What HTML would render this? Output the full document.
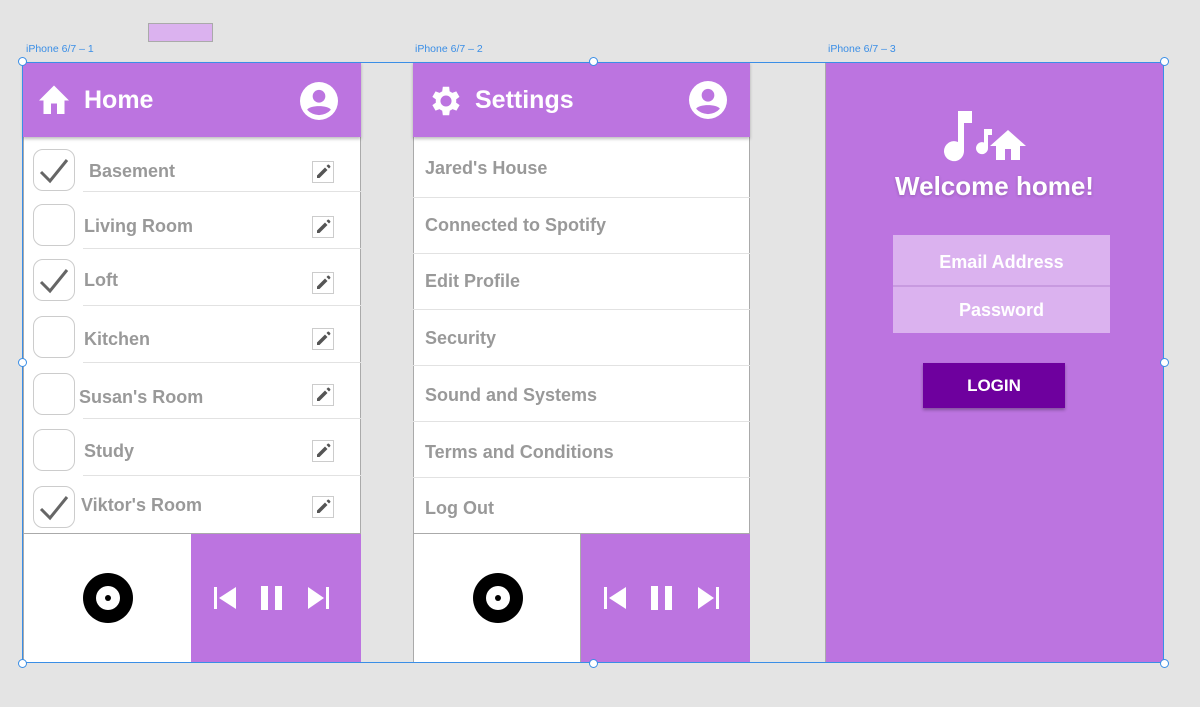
<!DOCTYPE html>
<html><head><style>
*{margin:0;padding:0;box-sizing:border-box}
body{width:1200px;height:707px;background:#e4e4e4;position:relative;overflow:hidden;font-family:"Liberation Sans",Roboto,sans-serif}
.a{position:absolute}
.lbl{font-size:10.5px;color:#3a8ee6}
.pur{background:#bc74e0}
.hd{color:#fff;font-size:25px;font-weight:bold}
.row{position:absolute;font-size:18px;color:#999;font-weight:bold}
.cb{position:absolute;left:33px;width:42px;height:42px;border:1px solid #ccc;border-radius:10px;background:#fff}
.sep{position:absolute;height:1px;background:#e2e2e2}
.h{position:absolute;width:9px;height:9px;border:1px solid #3a8ee6;background:#fff;border-radius:50%}
</style></head><body>
<div class="a" style="left:148px;top:23px;width:65px;height:19px;background:#dbb2ef;border:1px solid #aaa"></div>
<div class="a lbl" style="left:26px;top:43px">iPhone 6/7 – 1</div>
<div class="a lbl" style="left:415px;top:43px">iPhone 6/7 – 2</div>
<div class="a lbl" style="left:828px;top:43px">iPhone 6/7 – 3</div>

<!-- frame 1 -->
<div class="a" style="left:23px;top:62px;width:338px;height:601px;background:#fff;border:1px solid #aaa"></div>
<div class="a pur" style="left:23px;top:62px;width:338px;height:75px;box-shadow:0 2px 3px rgba(0,0,0,.25)"></div>
<svg class="a" style="left:36px;top:82px" width="36" height="34" viewBox="0 0 24 22"><path d="M10 21v-7h4v7h5v-9h3L12 2 2 12h3v9z" fill="#fff"/></svg>
<div class="a hd" style="left:84px;top:86px">Home</div>
<svg class="a" style="left:300px;top:82px" width="38" height="38" viewBox="0 0 24 24"><circle cx="12" cy="12" r="12" fill="#fff"/><circle cx="12" cy="9" r="4" fill="#bc74e0"/><path d="M4.5 17.5c2-3 13-3 15 0a10 10 0 0 1-15 0z" fill="#bc74e0"/></svg>
<div class="cb" style="top:149px"></div><div class="row" style="left:89px;top:161px">Basement</div><div class="sep" style="left:83px;top:191px;width:278px"></div>
<div class="cb" style="top:204px"></div><div class="row" style="left:84px;top:216px">Living Room</div><div class="sep" style="left:83px;top:248px;width:278px"></div>
<div class="cb" style="top:259px"></div><div class="row" style="left:84px;top:270px">Loft</div><div class="sep" style="left:83px;top:305px;width:278px"></div>
<div class="cb" style="top:316px"></div><div class="row" style="left:84px;top:329px">Kitchen</div><div class="sep" style="left:83px;top:362px;width:278px"></div>
<div class="cb" style="top:373px"></div><div class="row" style="left:79px;top:387px">Susan's Room</div><div class="sep" style="left:83px;top:418px;width:278px"></div>
<div class="cb" style="top:429px"></div><div class="row" style="left:84px;top:441px">Study</div><div class="sep" style="left:83px;top:475px;width:278px"></div>
<div class="cb" style="top:486px"></div><div class="row" style="left:81px;top:495px">Viktor's Room</div>
<svg class="a" style="left:38px;top:156px" width="32" height="28" viewBox="0 0 32 28"><path d="M3 16l9 9L29 4" stroke="#666" stroke-width="3" fill="none"/></svg>
<svg class="a" style="left:38px;top:266px" width="32" height="28" viewBox="0 0 32 28"><path d="M3 16l9 9L29 4" stroke="#666" stroke-width="3" fill="none"/></svg>
<svg class="a" style="left:38px;top:493px" width="32" height="28" viewBox="0 0 32 28"><path d="M3 16l9 9L29 4" stroke="#666" stroke-width="3" fill="none"/></svg>
<div class="a" style="left:23px;top:533px;width:338px;height:1px;background:#aaa"></div>
<div class="a pur" style="left:191px;top:534px;width:170px;height:129px"></div>
<svg class="a" style="left:83px;top:573px" width="50" height="50"><circle cx="25" cy="25" r="25"/><circle cx="25" cy="25" r="12" fill="#fff"/><circle cx="25" cy="25" r="3"/></svg>
<svg class="a" style="left:212px;top:586px" width="120" height="25" viewBox="0 0 120 25"><rect x="2" y="1" width="3" height="22" fill="#fff"/><path d="M24 1v22L7 12z" fill="#fff"/><rect x="49" y="0" width="7" height="24" fill="#fff"/><rect x="63" y="0" width="7" height="24" fill="#fff"/><path d="M96 1v22l16-11z" fill="#fff"/><rect x="114" y="1" width="3" height="22" fill="#fff"/></svg>

<!-- frame 2 -->
<div class="a" style="left:413px;top:62px;width:337px;height:601px;background:#fff;border:1px solid #aaa"></div>
<div class="a pur" style="left:413px;top:62px;width:337px;height:75px;box-shadow:0 2px 3px rgba(0,0,0,.25)"></div>
<svg class="a" style="left:427px;top:82px" width="38" height="38" viewBox="0 0 24 24"><path fill="#fff" d="M19.4 13a7.5 7.5 0 0 0 0-2l2.1-1.6-2-3.5-2.5 1a7.3 7.3 0 0 0-1.7-1L15 3h-4l-.4 2.9a7.3 7.3 0 0 0-1.7 1l-2.5-1-2 3.5L6.6 11a7.5 7.5 0 0 0 0 2l-2.200 1.6 2 3.5 2.500-1a7.3 7.3 0 0 0 1.7 1L11 21h4l.4-2.9a7.3 7.3 0 0 0 1.7-1l2.5 1 2-3.5zM13 15.5a3.5 3.5 0 1 1 0-7 3.5 3.5 0 0 1 0 7z" transform="translate(-1 0)"/></svg>
<div class="a hd" style="left:475px;top:86px">Settings</div>
<svg class="a" style="left:689px;top:81px" width="38" height="38" viewBox="0 0 24 24"><circle cx="12" cy="12" r="12" fill="#fff"/><circle cx="12" cy="9" r="4" fill="#bc74e0"/><path d="M4.5 17.5c2-3 13-3 15 0a10 10 0 0 1-15 0z" fill="#bc74e0"/></svg>
<div class="row" style="left:425px;top:158px">Jared's House</div><div class="sep" style="left:413px;top:197px;width:337px"></div>
<div class="row" style="left:425px;top:215px">Connected to Spotify</div><div class="sep" style="left:413px;top:253px;width:337px"></div>
<div class="row" style="left:425px;top:271px">Edit Profile</div><div class="sep" style="left:413px;top:309px;width:337px"></div>
<div class="row" style="left:425px;top:328px">Security</div><div class="sep" style="left:413px;top:365px;width:337px"></div>
<div class="row" style="left:425px;top:385px">Sound and Systems</div><div class="sep" style="left:413px;top:421px;width:337px"></div>
<div class="row" style="left:425px;top:442px">Terms and Conditions</div><div class="sep" style="left:413px;top:477px;width:337px"></div>
<div class="row" style="left:425px;top:498px">Log Out</div>
<div class="a" style="left:413px;top:533px;width:337px;height:1px;background:#aaa"></div>
<div class="a pur" style="left:581px;top:534px;width:169px;height:129px"></div>
<div class="a" style="left:580px;top:534px;width:1px;height:129px;background:#aaa"></div>
<svg class="a" style="left:473px;top:573px" width="50" height="50"><circle cx="25" cy="25" r="25"/><circle cx="25" cy="25" r="12" fill="#fff"/><circle cx="25" cy="25" r="3"/></svg>
<svg class="a" style="left:602px;top:586px" width="120" height="25" viewBox="0 0 120 25"><rect x="2" y="1" width="3" height="22" fill="#fff"/><path d="M24 1v22L7 12z" fill="#fff"/><rect x="49" y="0" width="7" height="24" fill="#fff"/><rect x="63" y="0" width="7" height="24" fill="#fff"/><path d="M96 1v22l16-11z" fill="#fff"/><rect x="114" y="1" width="3" height="22" fill="#fff"/></svg>

<!-- frame 3 -->
<div class="a pur" style="left:825px;top:62px;width:339px;height:601px;border-left:1px solid #aaa"></div>
<svg class="a" style="left:944px;top:109px" width="92" height="54" viewBox="0 0 92 54"><path d="M14 2h14v12h-8v28a10 10 0 1 1-6-9z" fill="#fff"/><path d="M40 20h8v6h-4v13a6 6 0 1 1-4-5.5z" fill="#fff"/><path d="M61 51V40h6v11h9V37h6L64 21 46 37h6v14z" fill="#fff"/></svg>
<div class="a" style="left:825px;top:171px;width:339px;text-align:center;color:#fff;font-size:26px;font-weight:bold;text-shadow:0 1px 3px rgba(0,0,0,.2)">Welcome home!</div>
<div class="a" style="left:893px;top:235px;width:217px;height:98px;background:#dbb2ef"></div>
<div class="a" style="left:893px;top:285px;width:217px;height:2px;background:#c89ae0"></div>
<div class="a" style="left:893px;top:252px;width:217px;text-align:center;color:#fff;font-size:18px;font-weight:bold">Email Address</div>
<div class="a" style="left:893px;top:300px;width:217px;text-align:center;color:#fff;font-size:18px;font-weight:bold">Password</div>
<div class="a" style="left:923px;top:363px;width:142px;height:45px;background:#6e009e;box-shadow:0 2px 3px rgba(0,0,0,.3);color:#fff;font-size:17px;font-weight:bold;text-align:center;line-height:45px">LOGIN</div>

<div class="a" style="left:22px;top:62px;width:1142px;height:601px;border:1px solid #3a8ee6"></div>
<div class="h" style="left:18px;top:57px"></div><div class="h" style="left:589px;top:57px"></div><div class="h" style="left:1160px;top:57px"></div>
<div class="h" style="left:18px;top:358px"></div><div class="h" style="left:1160px;top:358px"></div>
<div class="h" style="left:18px;top:659px"></div><div class="h" style="left:589px;top:659px"></div><div class="h" style="left:1160px;top:659px"></div>

<svg class="a" style="left:312px;top:161px" width="22" height="22" viewBox="0 0 22 22"><rect x=".5" y=".5" width="21" height="21" fill="#fff" stroke="#ccc"/><path d="M5 14.5V17h2.5l8-8-2.5-2.5zM17 7.5l-2.5-2.5 1.2-1.2a1 1 0 0 1 1.3 0l1.2 1.2a1 1 0 0 1 0 1.3z" fill="#555"/></svg>
<svg class="a" style="left:312px;top:216px" width="22" height="22" viewBox="0 0 22 22"><rect x=".5" y=".5" width="21" height="21" fill="#fff" stroke="#ccc"/><path d="M5 14.5V17h2.5l8-8-2.5-2.5zM17 7.5l-2.5-2.5 1.2-1.2a1 1 0 0 1 1.3 0l1.2 1.2a1 1 0 0 1 0 1.3z" fill="#555"/></svg>
<svg class="a" style="left:312px;top:272px" width="22" height="22" viewBox="0 0 22 22"><rect x=".5" y=".5" width="21" height="21" fill="#fff" stroke="#ccc"/><path d="M5 14.5V17h2.5l8-8-2.5-2.5zM17 7.5l-2.5-2.5 1.2-1.2a1 1 0 0 1 1.3 0l1.2 1.2a1 1 0 0 1 0 1.3z" fill="#555"/></svg>
<svg class="a" style="left:312px;top:328px" width="22" height="22" viewBox="0 0 22 22"><rect x=".5" y=".5" width="21" height="21" fill="#fff" stroke="#ccc"/><path d="M5 14.5V17h2.5l8-8-2.5-2.5zM17 7.5l-2.5-2.5 1.2-1.2a1 1 0 0 1 1.3 0l1.2 1.2a1 1 0 0 1 0 1.3z" fill="#555"/></svg>
<svg class="a" style="left:312px;top:384px" width="22" height="22" viewBox="0 0 22 22"><rect x=".5" y=".5" width="21" height="21" fill="#fff" stroke="#ccc"/><path d="M5 14.5V17h2.5l8-8-2.5-2.5zM17 7.5l-2.5-2.5 1.2-1.2a1 1 0 0 1 1.3 0l1.2 1.2a1 1 0 0 1 0 1.3z" fill="#555"/></svg>
<svg class="a" style="left:312px;top:440px" width="22" height="22" viewBox="0 0 22 22"><rect x=".5" y=".5" width="21" height="21" fill="#fff" stroke="#ccc"/><path d="M5 14.5V17h2.5l8-8-2.5-2.5zM17 7.5l-2.5-2.5 1.2-1.2a1 1 0 0 1 1.3 0l1.2 1.2a1 1 0 0 1 0 1.3z" fill="#555"/></svg>
<svg class="a" style="left:312px;top:496px" width="22" height="22" viewBox="0 0 22 22"><rect x=".5" y=".5" width="21" height="21" fill="#fff" stroke="#ccc"/><path d="M5 14.5V17h2.5l8-8-2.5-2.5zM17 7.5l-2.5-2.5 1.2-1.2a1 1 0 0 1 1.3 0l1.2 1.2a1 1 0 0 1 0 1.3z" fill="#555"/></svg>
</body></html>
